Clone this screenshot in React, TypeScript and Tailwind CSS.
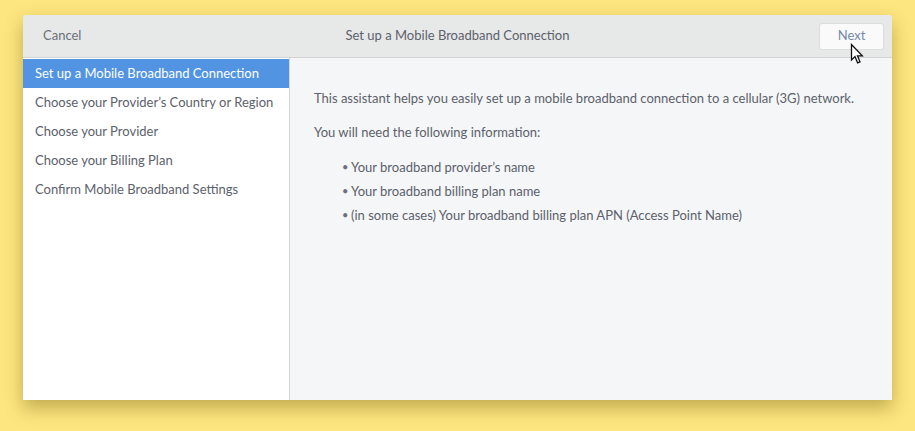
import React from "react";

export default function App() {
  const steps = [
    "Set up a Mobile Broadband Connection",
    "Choose your Provider\u2019s Country or Region",
    "Choose your Provider",
    "Choose your Billing Plan",
    "Confirm Mobile Broadband Settings",
  ];
  return (
    <div
      className="w-[915px] h-[431px] bg-[#fde57f] pt-[15px] pl-[23px] overflow-hidden"
      style={{ fontFamily: "Lato, 'Open Sans', sans-serif" }}
    >
      <div className="relative w-[869px] h-[385px] flex flex-col rounded-t-[3px] shadow-[0_8px_18px_rgba(120,100,20,0.45)]">
        <div className="h-[43px] shrink-0 flex items-center bg-[#e7e8e8] border-b border-[#d4d4d4] rounded-t-[3px] relative">
          <div className="w-[80px] pl-[20px] text-[13px] text-[#6b707a]">Cancel</div>
          <div className="flex-1 text-center text-[13px] text-[#5c616c]">
            Set up a Mobile Broadband Connection
          </div>
          <div className="w-[80px] flex justify-end pr-[8px]">
            <div className="w-[65px] h-[27px] bg-[#fafafa] border border-[#dcdddf] rounded-[3px] flex items-center justify-center text-[13px] text-[#7489a8]">
              Next
            </div>
          </div>
          <svg
            className="absolute left-[827px] top-[28px]"
            width="14"
            height="22"
            viewBox="0 0 14 22"
          >
            <path
              d="M1.5 1.5 L1.5 17 L5 13.6 L7.6 19.8 L10 18.8 L7.5 12.8 L12.3 12.8 Z"
              fill="#fff"
              stroke="#111"
              strokeWidth="1.3"
              strokeLinejoin="miter"
            />
          </svg>
        </div>
        <div className="flex flex-1 min-h-0">
          <div className="w-[267px] shrink-0 bg-white border-r border-[#d6d7d9] pt-px">
            {steps.map((s, i) => (
              <div
                key={s}
                className={
                  i === 0
                    ? "h-[29px] flex items-center pl-[12px] text-[13px] bg-[#5294e2] text-white"
                    : "h-[29px] flex items-center pl-[12px] text-[13px] text-[#5c616c]"
                }
              >
                {s}
              </div>
            ))}
          </div>
          <div className="flex-1 bg-[#f5f6f7] pl-[24px] pt-[31px] text-[13px] text-[#5c616c]">
            <p className="leading-[18px]">
              This assistant helps you easily set up a mobile broadband connection to a cellular (3G) network.
            </p>
            <p className="leading-[18px] mt-[16px]">You will need the following information:</p>
            <ul className="mt-[17px] pl-[28px] flex flex-col gap-[6px]">
              {[
                "Your broadband provider\u2019s name",
                "Your broadband billing plan name",
                "(in some cases) Your broadband billing plan APN (Access Point Name)",
              ].map((t) => (
                <li key={t} className="flex items-center leading-[18px]">
                  <span className="w-[9px] text-[11px] text-[#6b707a]">•</span>
                  {t}
                </li>
              ))}
            </ul>
          </div>
        </div>
      </div>
    </div>
  );
}
